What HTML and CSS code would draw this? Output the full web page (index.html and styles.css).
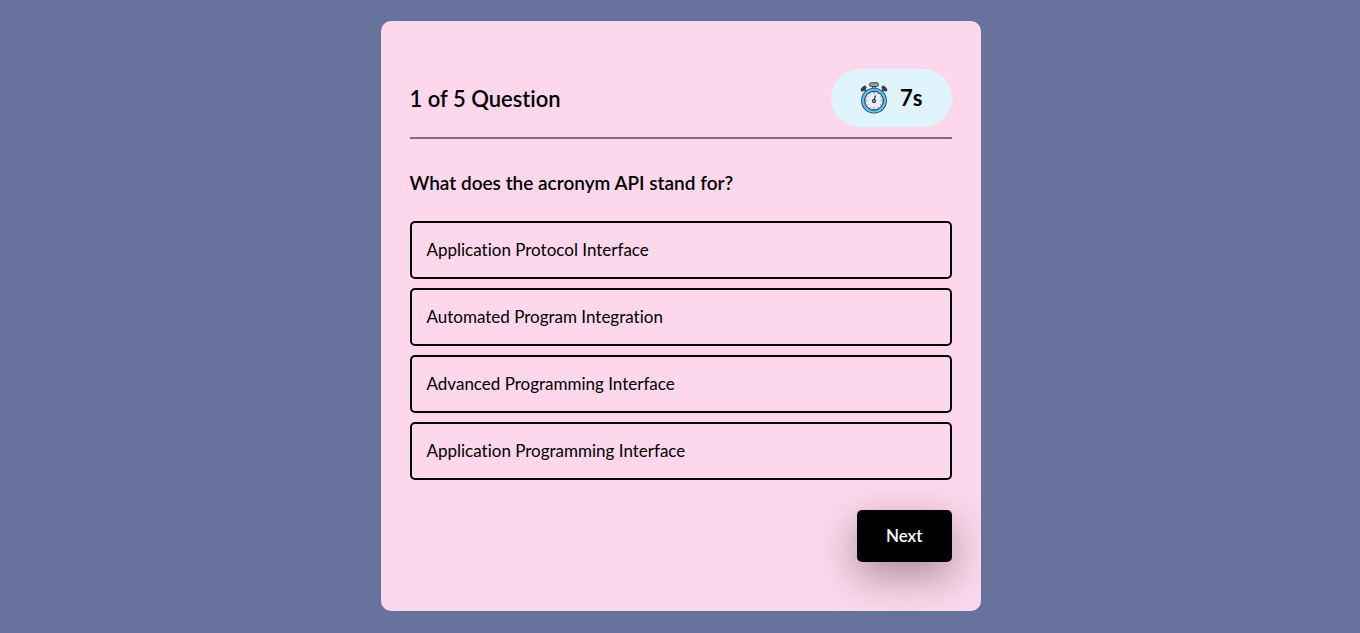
FILE: index.html
```html
<!DOCTYPE html>
<html lang="en">
<head>
<meta charset="utf-8">
<meta name="viewport" content="width=device-width, initial-scale=1">
<title>Quiz</title>
<link rel="stylesheet" href="styles.css">
</head>
<body>
<main class="card">
  <header class="header">
    <p class="count">1 of 5 Question</p>
    <div class="timer">
      <svg class="clock" viewBox="0 0 28 32" aria-hidden="true">
        <path d="M4 7l3.500 3.500M24 7l-3.500 3.500" stroke="#4a525b" stroke-width="2"/>
        <ellipse cx="3.600" cy="6.600" rx="3.500" ry="2" transform="rotate(-45 3.600 6.600)" fill="#3b4048"/>
        <ellipse cx="24.400" cy="6.600" rx="3.500" ry="2" transform="rotate(45 24.400 6.600)" fill="#3b4048"/>
        <path d="M12.500 4h3v4h-3z" fill="#a9b2ba" stroke="#3b4048" stroke-width=".8"/>
        <rect x="9.500" y=".8" width="9" height="3.600" rx="1.600" fill="#9aa2aa" stroke="#3b4048" stroke-width="1"/>
        <circle cx="14" cy="18.700" r="12.900" fill="#2e3d47"/>
        <circle cx="14" cy="18.700" r="10.900" fill="none" stroke="#55c3ee" stroke-width="2.400"/>
        <circle cx="14" cy="18.700" r="9.300" fill="#e9edfb" stroke="#344853" stroke-width="1"/>
        <path d="M14 10v2M14 25.400v2M5.300 18.700h2M20.700 18.700h2M9.700 11.200l.7 1.200M18.300 11.200l-.7 1.200M6.500 14.300l1.200.7M21.500 14.300l-1.200.7M6.500 23.100l1.200-.7M21.500 23.100l-1.200-.7M9.700 26.200l.7-1.200M18.300 26.200l-.7-1.200" stroke="#626c7b" stroke-width=".8"/>
        <path d="M14 18.700 15.500 13.500" stroke="#303942" stroke-width="1.200"/>
        <circle cx="14" cy="19" r="1.700" fill="#4c9cab" stroke="#303942" stroke-width="1"/>
      </svg>
      <span>7s</span>
    </div>
  </header>
  <h1 class="question">What does the acronym API stand for?</h1>
  <div class="options">
    <button class="option" type="button">Application Protocol Interface</button>
    <button class="option" type="button">Automated Program Integration</button>
    <button class="option" type="button">Advanced Programming Interface</button>
    <button class="option" type="button">Application Programming Interface</button>
  </div>
  <button class="next" type="button">Next</button>
</main>
</body>
</html>
```
FILE: styles.css
```css
* {
  box-sizing: border-box;
}

body {
  margin: 0;
  padding: 0 0 1px 1px;
  min-height: 100vh;
  display: grid;
  place-items: center;
  background: #68739d;
  color: #000;
  font-family: Lato, "Open Sans", sans-serif;
  font-variant-ligatures: none;
}

.card {
  width: calc(100% - 32px);
  max-width: 600px;
  padding: 48px 29px 49px;
  display: flex;
  flex-direction: column;
  border-radius: 10px;
  background: #fdd7eb;
}

.header {
  padding-bottom: 10px;
  display: flex;
  align-items: center;
  justify-content: space-between;
  border-bottom: 2px solid #7f6c76;
}

.count {
  margin: 0;
  font-size: 22px;
  font-weight: 600;
}

.timer {
  padding: 13px 29px;
  display: flex;
  align-items: center;
  gap: 12px;
  border-radius: 29px;
  background: #e0f4fd;
  font-size: 22px;
  line-height: 32px;
  font-weight: 700;
}

.clock {
  width: 28px;
  height: 32px;
}

.question {
  margin: 32px 0 26px;
  font-size: 19px;
  line-height: 24px;
  font-weight: 600;
}

.options {
  display: grid;
  gap: 9px;
}

.option {
  padding: 17px 15px;
  border: 2px solid #000;
  border-radius: 5px;
  background: transparent;
  color: inherit;
  font: 400 17px/20px Lato, "Open Sans", sans-serif;
  font-variant-ligatures: none;
  text-align: left;
  cursor: pointer;
}

.next {
  align-self: flex-end;
  margin-top: 30px;
  padding: 16px 29px;
  border: 0;
  border-radius: 5px;
  background: #000;
  box-shadow: 0 14px 40px rgba(0, 0, 0, 0.35);
  color: #fff;
  font: 600 17px/20px Lato, "Open Sans", sans-serif;
  cursor: pointer;
}
```
